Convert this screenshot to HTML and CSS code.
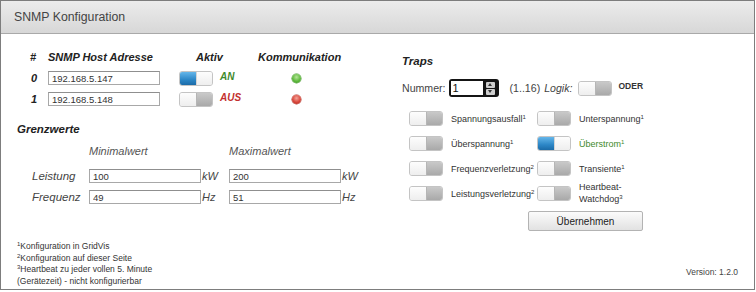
FILE: index.html
```html
<!DOCTYPE html>
<html lang="de">
<head>
<meta charset="utf-8">
<title>SNMP Konfiguration</title>
<link rel="stylesheet" href="styles.css">
</head>
<body>
<div class="panel">
  <div class="header">SNMP Konfiguration</div>
  <div class="body">
    <div class="left">
      <div class="hosts">
        <div class="th">#</div>
        <div class="th">SNMP Host Adresse</div>
        <div class="th th-center">Aktiv</div>
        <div class="th">Kommunikation</div>

        <div class="idx">0</div>
        <div><input class="field host" type="text" value="192.168.5.147"></div>
        <div class="act"><span class="toggle on"><span class="k"></span><span class="k"></span></span><span class="state an">AN</span></div>
        <div class="dotcell"><span class="dot green"></span></div>

        <div class="idx">1</div>
        <div><input class="field host" type="text" value="192.168.5.148"></div>
        <div class="act"><span class="toggle"><span class="k"></span><span class="k"></span></span><span class="state aus">AUS</span></div>
        <div class="dotcell"><span class="dot red"></span></div>
      </div>

      <div class="section-title">Grenzwerte</div>
      <div class="limits">
        <div></div>
        <div class="colhead">Minimalwert</div>
        <div></div>
        <div class="colhead">Maximalwert</div>
        <div></div>

        <div class="lbl">Leistung</div>
        <div><input class="field lim" type="text" value="100"></div>
        <div class="unit">kW</div>
        <div><input class="field lim" type="text" value="200"></div>
        <div class="unit">kW</div>

        <div class="lbl">Frequenz</div>
        <div><input class="field lim" type="text" value="49"></div>
        <div class="unit">Hz</div>
        <div><input class="field lim" type="text" value="51"></div>
        <div class="unit">Hz</div>
      </div>

      <div class="notes">
        <div><sup>1</sup>Konfiguration in GridVis</div>
        <div><sup>2</sup>Konfiguration auf dieser Seite</div>
        <div><sup>3</sup>Heartbeat zu jeder vollen 5. Minute</div>
        <div>(Gerätezeit) - nicht konfigurierbar</div>
      </div>
    </div>

    <div class="right">
      <div class="section-title traps-title">Traps</div>
      <div class="numrow">
        <span class="numlbl">Nummer:</span>
        <span class="spinner"><span class="spin-field">1</span><span class="spin-btns"><span class="sb up"></span><span class="sb down"></span></span></span>
        <span class="range">(1..16)</span>
        <span class="logik">Logik:</span>
        <span class="toggle"><span class="k"></span><span class="k"></span></span>
        <span class="oder">ODER</span>
      </div>

      <div class="traps">
        <div class="trap"><span class="toggle"><span class="k"></span><span class="k"></span></span><span class="tl">Spannungsausfall<sup>1</sup></span></div>
        <div class="trap"><span class="toggle"><span class="k"></span><span class="k"></span></span><span class="tl">Unterspannung<sup>1</sup></span></div>
        <div class="trap"><span class="toggle"><span class="k"></span><span class="k"></span></span><span class="tl">Überspannung<sup>1</sup></span></div>
        <div class="trap"><span class="toggle on"><span class="k"></span><span class="k"></span></span><span class="tl green-text">Überstrom<sup>1</sup></span></div>
        <div class="trap"><span class="toggle"><span class="k"></span><span class="k"></span></span><span class="tl">Frequenzverletzung<sup>2</sup></span></div>
        <div class="trap"><span class="toggle"><span class="k"></span><span class="k"></span></span><span class="tl">Transiente<sup>1</sup></span></div>
        <div class="trap"><span class="toggle"><span class="k"></span><span class="k"></span></span><span class="tl">Leistungsverletzung<sup>2</sup></span></div>
        <div class="trap"><span class="toggle"><span class="k"></span><span class="k"></span></span><span class="tl two">Heartbeat-<br>Watchdog<sup>3</sup></span></div>
      </div>

      <button class="apply" type="button">Übernehmen</button>

      <div class="version">Version: 1.2.0</div>
    </div>
  </div>
</div>
</body>
</html>
```

FILE: styles.css
```css
html, body {
  margin: 0;
  padding: 0;
  background: #ffffff;
}

body {
  font-family: "Liberation Sans", Arial, sans-serif;
  color: #333;
}

.panel {
  box-sizing: border-box;
  width: 755px;
  height: 290px;
  border: 1px solid #7d7d7d;
  display: flex;
  flex-direction: column;
}

.header {
  box-sizing: border-box;
  height: 33px;
  padding: 9px 0 0 13px;
  font-size: 12.3px;
  color: #444;
  background: linear-gradient(#ececec, #d7d7d7);
  border-bottom: 1px solid #a9a9a9;
}

.body {
  flex: 1;
  display: flex;
  padding: 16px 0 2px 16px;
}

.left {
  width: 385px;
  display: flex;
  flex-direction: column;
}

.right {
  flex: 1;
  display: flex;
  flex-direction: column;
  align-items: flex-start;
}

/* host table */
.hosts {
  margin-left: 13px;
  display: grid;
  grid-template-columns: 18px 131px 79px 80px;
  grid-auto-rows: 14px;
  row-gap: 7px;
  align-items: center;
}

.th {
  font-size: 11px;
  font-weight: bold;
  font-style: italic;
  color: #222;
  white-space: nowrap;
}

.th-center {
  padding-left: 17px;
}

.idx {
  font-size: 11px;
  font-weight: bold;
  font-style: italic;
  color: #222;
  padding-left: 1px;
}

.field {
  box-sizing: border-box;
  display: block;
  height: 14px;
  margin: 0;
  padding: 0 3px;
  border: 1px solid #a8a8a8;
  border-top-color: #8f8f8f;
  background: #fff;
  font-family: "Liberation Sans", Arial, sans-serif;
  font-size: 9.5px;
  color: #333;
  outline: none;
}

.host {
  width: 112px;
}

.lim {
  width: 112px;
}

.act {
  display: flex;
  align-items: center;
  gap: 7px;
}

.state {
  font-size: 10px;
  font-weight: bold;
  font-style: italic;
  margin-top: -4px;
}

.an {
  color: #3f8a2d;
}

.aus {
  color: #c3302f;
}

.dotcell {
  display: flex;
  justify-content: center;
  padding-right: 4px;
}

.dot {
  width: 9px;
  height: 9px;
  border-radius: 50%;
}

.dot.green {
  background: radial-gradient(circle at 50% 35%, #b6e59a 0%, #5fba3e 55%, #3b8f24 100%);
  box-shadow: 0 0 0 0.5px #4a9a32;
}

.dot.red {
  background: radial-gradient(circle at 50% 35%, #f3a49a 0%, #d9473b 55%, #a82a22 100%);
  box-shadow: 0 0 0 0.5px #b03a30;
}

/* toggles */
.toggle {
  box-sizing: border-box;
  display: inline-flex;
  width: 34px;
  height: 15px;
  border: 1px solid #c4c4c4;
  border-radius: 3px;
  overflow: hidden;
  background: #f7f7f7;
  flex: none;
}

.toggle .k {
  flex: 1;
}

.toggle .k:first-child {
  background: linear-gradient(#fdfdfd, #eeeeee);
}

.toggle .k:last-child {
  background: linear-gradient(#c9c9c9, #a9a9a9);
  border-left: 1px solid #b5b5b5;
}

.toggle.on .k:first-child {
  background: linear-gradient(#64b6ea, #2c86c6 60%, #1b6ba8);
}

.toggle.on .k:last-child {
  background: linear-gradient(#fdfdfd, #eeeeee);
  border-left: 1px solid #d5d5d5;
}

/* limits */
.section-title {
  font-size: 11.5px;
  font-weight: bold;
  font-style: italic;
  color: #222;
  line-height: 14px;
}

.left .section-title {
  margin-top: 16px;
}

.limits {
  margin-top: 12px;
  margin-left: 15px;
  display: grid;
  grid-template-columns: 57px 112px 28px 112px 28px;
  grid-template-rows: 14px 14px 14px;
  row-gap: 7px;
  align-items: center;
}

.limits .colhead {
  font-size: 11px;
  font-style: italic;
  color: #555;
  margin-top: -8px;
}

.lbl {
  font-size: 11.5px;
  font-style: italic;
  color: #444;
}

.unit {
  font-size: 11px;
  font-style: italic;
  color: #444;
  padding-left: 1px;
}

.notes {
  margin-top: auto;
  font-size: 8.5px;
  line-height: 11.5px;
  color: #333;
}

.notes sup {
  font-size: 6px;
  vertical-align: 3px;
  line-height: 0;
}

/* traps */
.traps-title {
  margin-top: 4px;
}

.numrow {
  margin-top: 11px;
  display: flex;
  align-items: center;
  font-size: 10.6px;
  color: #444;
}

.numlbl {
  margin-right: 3px;
}

.spinner {
  box-sizing: border-box;
  display: inline-flex;
  align-items: center;
  width: 50px;
  height: 18px;
  padding: 2px;
  background: #151515;
  border-radius: 3px;
}

.spin-field {
  box-sizing: border-box;
  width: 32px;
  height: 14px;
  background: #fff;
  font-size: 11px;
  line-height: 14px;
  padding-left: 2px;
  color: #111;
}

.spin-btns {
  display: flex;
  flex-direction: column;
  gap: 1px;
  margin-left: 3px;
}

.sb {
  width: 9px;
  height: 6px;
  background: #cfcfcf;
  border-radius: 1px;
  position: relative;
}

.sb::after {
  content: "";
  position: absolute;
  left: 2.5px;
  width: 0;
  height: 0;
  border-left: 2px solid transparent;
  border-right: 2px solid transparent;
}

.sb.up::after {
  top: 1.5px;
  border-bottom: 3px solid #333;
}

.sb.down::after {
  top: 1.5px;
  border-top: 3px solid #333;
}

.range {
  margin-left: 11px;
}

.logik {
  margin-left: 4px;
  margin-right: 6px;
  font-style: italic;
}

.oder {
  margin-left: 6px;
  margin-top: -4px;
  font-size: 8.5px;
  font-weight: bold;
  color: #333;
}

.traps {
  margin-top: 14px;
  margin-left: 7px;
  display: grid;
  grid-template-columns: 128px 128px;
  grid-auto-rows: 15px;
  row-gap: 10px;
  align-items: center;
}

.trap {
  display: flex;
  align-items: center;
  gap: 8px;
}

.tl {
  font-size: 9px;
  color: #333;
  white-space: nowrap;
}

.tl sup {
  font-size: 6px;
  vertical-align: 3px;
  line-height: 0;
}

.tl.two {
  line-height: 11.5px;
}

.green-text {
  color: #3f8a2d;
}

.apply {
  margin-top: 10px;
  margin-left: 126px;
  width: 115px;
  height: 20px;
  padding: 0;
  border: 1px solid #b3b3b3;
  border-radius: 2px;
  background: linear-gradient(#fbfbfb, #e2e2e2);
  font-family: "Liberation Sans", Arial, sans-serif;
  font-size: 10px;
  color: #222;
}

.version {
  margin-top: auto;
  margin-bottom: 10px;
  align-self: flex-end;
  margin-right: 16px;
  font-size: 8.5px;
  color: #444;
}
```
